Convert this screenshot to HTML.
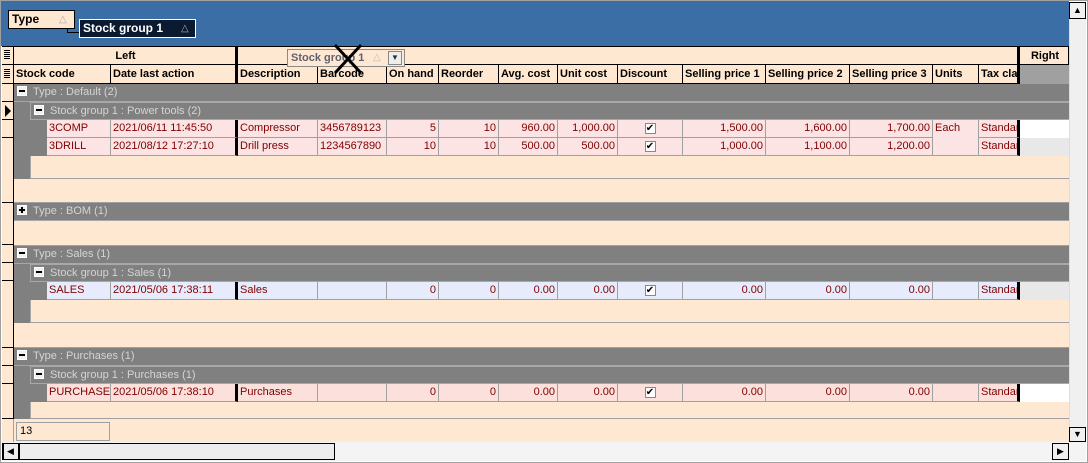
<!DOCTYPE html>
<html><head><style>
*{margin:0;padding:0;box-sizing:border-box}
body{width:1088px;height:463px;overflow:hidden;background:#fff;font-family:"Liberation Sans",sans-serif;font-size:12px;position:relative}
.a{position:absolute}
.hd{position:absolute;height:19px;border-right:1px solid #000;border-bottom:1px solid #000;font-weight:bold;font-size:11px;line-height:18px;padding-left:2px;white-space:nowrap;overflow:hidden;background:#ffe8d2;color:#000}
.r{position:absolute;height:18px;display:flex}
.r div{height:18px;border-right:1px solid #a0a0a0;border-bottom:1px solid #a0a0a0;color:#800000;line-height:17px;padding:0 2px;white-space:nowrap;overflow:hidden;font-size:11px;flex:none}
.n{text-align:right}
.g{position:absolute;background:#808080;color:#d4d4d4;height:18px;line-height:17px;font-size:11px;border-bottom:1px solid #a8a8a8;white-space:nowrap}
.bx{display:inline-block;width:10px;height:10px;background:#f0f0f0;border:1px solid #fff;vertical-align:middle;margin:0 6px 3px 3px;position:relative}
.bx:after{content:"";position:absolute;left:1px;top:3px;width:6px;height:2px;background:#000}
.bx.p:before{content:"";position:absolute;left:3px;top:1px;width:2px;height:6px;background:#000}
.chk{display:inline-block;width:11px;height:11px;border:1px solid #888;background:#fff;font-size:10px;line-height:9px;text-align:center;color:#000}
.ft{position:absolute;background:#ffe8d2;border-bottom:1px solid #a0a0a0}
.ind{position:absolute;left:2px;width:12px;border-right:1px solid #000;border-bottom:1px solid #000;background:#ffe8d2}
</style></head><body>
<div class="a" style="left:0;top:0;width:1088px;height:463px;border:1px solid #a0a0a0"></div>
<div class="a" style="left:1px;top:1px;width:1068px;height:45px;background:#3b6ea5"></div>
<div class="a" style="left:8px;top:10px;width:67px;height:19px;background:#ffe8d2;border:1px solid #000;font-weight:bold;font-size:12px;line-height:17px;padding-left:3px">Type<span style="position:absolute;left:50px;color:#aaa;font-weight:normal;font-size:10px">△</span></div>
<div class="a" style="left:67px;top:29px;width:1px;height:4px;background:#000"></div>
<div class="a" style="left:67px;top:32px;width:13px;height:1px;background:#000"></div>
<div class="a" style="left:79px;top:19px;width:117px;height:19px;background:#0b1a30;border:1px solid #fff;color:#fff;font-weight:bold;font-size:12px;line-height:17px;padding-left:3px">Stock group 1<span style="position:absolute;left:101px;color:#aaa;font-weight:normal;font-size:10px">△</span></div>

<div class="a" style="left:2px;top:46px;width:1067px;height:396px;background:#ffe8d2"></div>
<div class="a" style="left:2px;top:46px;width:1067px;height:1px;background:#000"></div>

<div class="ind" style="top:46px;height:19px;border-top:1px solid #000"></div>
<div class="ind" style="top:65px;height:19px"></div>
<div class="hd" style="left:14px;top:46px;width:224px;text-align:center;border-right:3px solid #000;border-top:1px solid #000">Left</div>
<div class="hd" style="left:238px;top:46px;width:782px;border-right:3px solid #000;border-top:1px solid #000"></div>
<div class="hd" style="left:1020px;top:46px;width:49px;text-align:center;border-top:1px solid #000">Right</div>

<div class="hd" style="left:14px;top:65px;width:97px">Stock code</div>
<div class="hd" style="left:111px;top:65px;width:127px;border-right:3px solid #000">Date last action</div>
<div class="hd" style="left:238px;top:65px;width:80px">Description</div>
<div class="hd" style="left:318px;top:65px;width:69px">Barcode</div>
<div class="hd" style="left:387px;top:65px;width:52px">On hand</div>
<div class="hd" style="left:439px;top:65px;width:60px">Reorder</div>
<div class="hd" style="left:499px;top:65px;width:59px">Avg. cost</div>
<div class="hd" style="left:558px;top:65px;width:60px">Unit cost</div>
<div class="hd" style="left:618px;top:65px;width:65px">Discount</div>
<div class="hd" style="left:683px;top:65px;width:83px">Selling price 1</div>
<div class="hd" style="left:766px;top:65px;width:84px">Selling price 2</div>
<div class="hd" style="left:850px;top:65px;width:83px">Selling price 3</div>
<div class="hd" style="left:933px;top:65px;width:46px">Units</div>
<div class="hd" style="left:979px;top:65px;width:41px;border-right:3px solid #000">Tax cla</div>
<div class="a" style="left:1020px;top:65px;width:49px;height:19px;background:#a0a0a0"></div>
<div class="a" style="left:4px;top:50px;width:6px;height:10px;background:repeating-linear-gradient(#000 0 1px,transparent 1px 2px)"></div>
<div class="a" style="left:4px;top:69px;width:6px;height:10px;background:repeating-linear-gradient(#000 0 1px,transparent 1px 2px)"></div>

<div class="a" style="left:287px;top:49px;width:118px;height:18px;background:#ffe8d2;border:1px solid #8a8a8a;color:#606070;font-weight:bold;font-size:11px;line-height:16px;padding-left:3px">Stock group 1<span style="position:absolute;left:85px;color:#bbb;font-weight:normal;font-size:10px">△</span><span style="position:absolute;left:100px;top:1px;width:14px;height:14px;border:1px solid #888;background:#eee;font-size:8px;line-height:12px;text-align:center;color:#333">▼</span></div>
<svg class="a" style="left:330px;top:43px" width="36" height="32"><path d="M5 2 L31 30 M31 2 L5 30" stroke="#000" stroke-width="3"/></svg>

<div class="ind" style="top:84px;height:18px"></div>
<div class="ind" style="top:102px;height:18px"></div>
<div class="a" style="left:5px;top:105px;width:0;height:0;border-top:6px solid transparent;border-bottom:6px solid transparent;border-left:6px solid #000"></div>
<div class="ind" style="top:120px;height:18px"></div>
<div class="ind" style="top:138px;height:65px"></div>
<div class="ind" style="top:203px;height:42px"></div>
<div class="ind" style="top:245px;height:18px"></div>
<div class="ind" style="top:263px;height:18px"></div>
<div class="ind" style="top:281px;height:67px"></div>
<div class="ind" style="top:348px;height:18px"></div>
<div class="ind" style="top:366px;height:18px"></div>
<div class="ind" style="top:384px;height:35px"></div>
<div class="a" style="left:2px;top:419px;width:12px;height:23px;background:#ffe8d2;border-right:1px solid #a0a0a0"></div>

<div class="g" style="left:14px;top:84px;width:1055px"><span class="bx"></span>Type : Default (2)</div>
<div class="a" style="left:14px;top:102px;width:16px;height:77px;background:#808080"></div>
<div class="g" style="left:30px;top:102px;width:1039px;border-left:1px solid #a8a8a8;border-top:1px solid #a8a8a8"><span class="bx"></span>Stock group 1 : Power tools (2)</div>
<div class="a" style="left:30px;top:120px;width:17px;height:36px;background:#808080"></div>
<div class="r" style="left:47px;top:120px;background:#fce4e4">
<div style="width:64px">3COMP</div><div style="width:127px;border-right:3px solid #000">2021/06/11 11:45:50</div><div style="width:80px">Compressor</div><div style="width:69px">3456789123</div><div class="n" style="width:52px">5</div><div class="n" style="width:60px">10</div><div class="n" style="width:59px">960.00</div><div class="n" style="width:60px">1,000.00</div><div style="width:65px;text-align:center"><span class="chk">✔</span></div><div class="n" style="width:83px">1,500.00</div><div class="n" style="width:84px">1,600.00</div><div class="n" style="width:83px">1,700.00</div><div style="width:46px;border-bottom:none">Each</div><div style="width:41px;border-right:3px solid #000">Standard</div><div style="width:49px;background:#fff;border:none"></div></div>
<div class="r" style="left:47px;top:138px;background:#fce4e4">
<div style="width:64px">3DRILL</div><div style="width:127px;border-right:3px solid #000">2021/08/12 17:27:10</div><div style="width:80px">Drill press</div><div style="width:69px">1234567890</div><div class="n" style="width:52px">10</div><div class="n" style="width:60px">10</div><div class="n" style="width:59px">500.00</div><div class="n" style="width:60px">500.00</div><div style="width:65px;text-align:center"><span class="chk">✔</span></div><div class="n" style="width:83px">1,000.00</div><div class="n" style="width:84px">1,100.00</div><div class="n" style="width:83px">1,200.00</div><div style="width:46px"></div><div style="width:41px;border-right:3px solid #000">Standard</div><div style="width:49px;background:#e8e8e8;border:none"></div></div>
<div class="ft" style="left:30px;top:156px;width:1039px;height:23px;border-left:1px solid #a8a8a8"></div>
<div class="ft" style="left:14px;top:179px;width:1055px;height:24px"></div>

<div class="g" style="left:14px;top:203px;width:1055px"><span class="bx p"></span>Type : BOM (1)</div>
<div class="ft" style="left:14px;top:221px;width:1055px;height:25px"></div>

<div class="g" style="left:14px;top:246px;width:1055px"><span class="bx"></span>Type : Sales (1)</div>
<div class="a" style="left:14px;top:264px;width:16px;height:59px;background:#808080"></div>
<div class="g" style="left:30px;top:264px;width:1039px;border-left:1px solid #a8a8a8;border-top:1px solid #a8a8a8"><span class="bx"></span>Stock group 1 : Sales (1)</div>
<div class="a" style="left:30px;top:282px;width:17px;height:18px;background:#808080"></div>
<div class="r" style="left:47px;top:282px;background:#e6ecfc">
<div style="width:64px">SALES</div><div style="width:127px;border-right:3px solid #000">2021/05/06 17:38:11</div><div style="width:80px">Sales</div><div style="width:69px"></div><div class="n" style="width:52px">0</div><div class="n" style="width:60px">0</div><div class="n" style="width:59px">0.00</div><div class="n" style="width:60px">0.00</div><div style="width:65px;text-align:center"><span class="chk">✔</span></div><div class="n" style="width:83px">0.00</div><div class="n" style="width:84px">0.00</div><div class="n" style="width:83px">0.00</div><div style="width:46px"></div><div style="width:41px;border-right:3px solid #000">Standard</div><div style="width:49px;background:#e8e8e8;border:none"></div></div>
<div class="ft" style="left:30px;top:300px;width:1039px;height:23px;border-left:1px solid #a8a8a8"></div>
<div class="ft" style="left:14px;top:323px;width:1055px;height:25px"></div>

<div class="g" style="left:14px;top:348px;width:1055px"><span class="bx"></span>Type : Purchases (1)</div>
<div class="a" style="left:14px;top:366px;width:16px;height:53px;background:#808080"></div>
<div class="g" style="left:30px;top:366px;width:1039px;border-left:1px solid #a8a8a8;border-top:1px solid #a8a8a8"><span class="bx"></span>Stock group 1 : Purchases (1)</div>
<div class="a" style="left:30px;top:384px;width:17px;height:18px;background:#808080"></div>
<div class="r" style="left:47px;top:384px;background:#fce0dc">
<div style="width:64px">PURCHASE</div><div style="width:127px;border-right:3px solid #000">2021/05/06 17:38:10</div><div style="width:80px">Purchases</div><div style="width:69px"></div><div class="n" style="width:52px">0</div><div class="n" style="width:60px">0</div><div class="n" style="width:59px">0.00</div><div class="n" style="width:60px">0.00</div><div style="width:65px;text-align:center"><span class="chk">✔</span></div><div class="n" style="width:83px">0.00</div><div class="n" style="width:84px">0.00</div><div class="n" style="width:83px">0.00</div><div style="width:46px"></div><div style="width:41px;border-right:3px solid #000">Standard</div><div style="width:49px;background:#fff;border:none"></div></div>
<div class="ft" style="left:30px;top:402px;width:1039px;height:17px;border-left:1px solid #a8a8a8"></div>
<div class="a" style="left:14px;top:402px;width:16px;height:17px;background:#808080"></div>

<div class="a" style="left:16px;top:422px;width:94px;height:19px;border:1px solid #a0a0a0;font-size:11px;line-height:17px;padding-left:3px;color:#000">13</div>

<div class="a" style="left:1069px;top:2px;width:17px;height:440px;background:#f0f0f0;border-left:1px solid #ddd"></div>
<div class="a" style="left:1069px;top:2px;width:17px;height:17px;border:1px solid #000;background:#f0f0f0;font-size:9px;text-align:center;line-height:15px">▲</div>
<div class="a" style="left:1069px;top:427px;width:17px;height:15px;border:1px solid #000;background:#f0f0f0;font-size:9px;text-align:center;line-height:13px">▼</div>
<div class="a" style="left:2px;top:442px;width:1084px;height:19px;background:#f4f4f4"></div>
<div class="a" style="left:2px;top:443px;width:333px;height:17px;border:1px solid #000;border-left-width:2px;background:#ededed"></div>
<div class="a" style="left:3px;top:443px;width:17px;height:17px;border-right:2px solid #000;font-size:9px;text-align:center;line-height:17px">◀</div>
<div class="a" style="left:1052px;top:443px;width:17px;height:17px;border:1px solid #000;background:#f0f0f0;font-size:9px;text-align:center;line-height:15px">▶</div>
</body></html>
